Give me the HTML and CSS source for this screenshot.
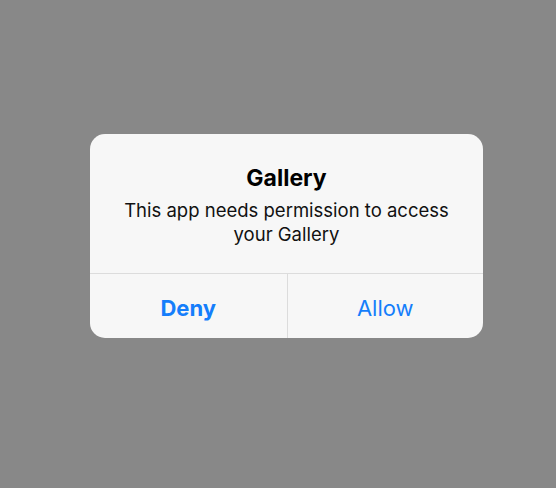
FILE: index.html
```html
<!DOCTYPE html>
<html lang="en">
<head>
<meta charset="utf-8">
<title>Gallery permission</title>
<link rel="stylesheet" href="styles.css">
</head>
<body>
  <div class="alert" role="alertdialog" aria-labelledby="alert-title">
    <div class="alert-content">
      <h1 class="alert-title" id="alert-title">Gallery</h1>
      <p class="alert-message">This app needs permission to access your Gallery</p>
    </div>
    <div class="alert-actions">
      <button class="alert-btn alert-btn-bold">Deny</button>
      <button class="alert-btn">Allow</button>
    </div>
  </div>
</body>
</html>
```
FILE: styles.css
```css
html, body {
  margin: 0;
  height: 100%;
}
body {
  background: #888888;
  font-family: Inter, "Liberation Sans", Arial, sans-serif;
  padding: 134px 0 0 90px;
  box-sizing: border-box;
}
.alert {
  width: 393px;
  height: 204px;
  background: #f7f7f7;
  border-radius: 15px;
  overflow: hidden;
  display: flex;
  flex-direction: column;
}
.alert-content {
  height: 140px;
  box-sizing: border-box;
  padding: 30px 20px 0;
  text-align: center;
  border-bottom: 1px solid #dcdcdc;
}
.alert-title {
  margin: 0;
  font-size: 23px;
  line-height: 28px;
  font-weight: bold;
  color: #000;
}
.alert-message {
  margin: 6px 0 0;
  font-size: 18.5px;
  line-height: 24px;
  color: #111;
}
.alert-actions {
  flex: 1;
  display: grid;
  grid-template-columns: 1fr 1fr;
}
.alert-btn {
  border: 0;
  background: transparent;
  font-family: inherit;
  font-size: 22px;
  line-height: 60px;
  padding: 3px 0 0;
  color: #157efb;
  cursor: pointer;
}
.alert-btn + .alert-btn {
  border-left: 1px solid #dcdcdc;
}
.alert-btn-bold {
  font-weight: bold;
}
```
